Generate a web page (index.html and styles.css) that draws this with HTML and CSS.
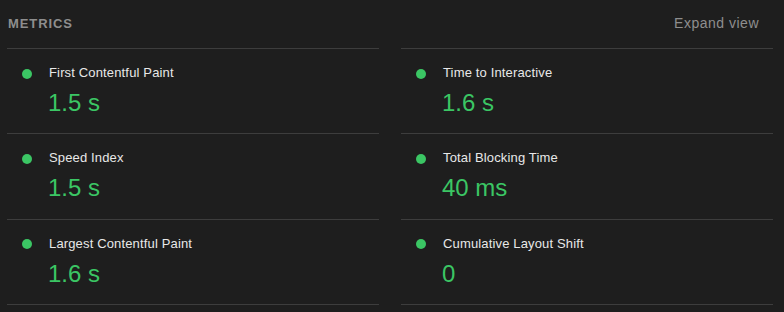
FILE: index.html
```html
<!DOCTYPE html>
<html>
  <head>
    <title>Metrics</title>
    <link rel="stylesheet" href="styles.css">
  </head>
  <body>
    <div class="metrics">
      <div class="metrics-header">
        <span class="metrics-title">Metrics</span>
        <span class="expand">Expand view</span>
      </div>

      <div class="metrics-grid">
        <div class="metric">
          <span class="dot"></span>
          <div class="metric-title">First Contentful Paint</div>
          <div class="metric-value">1.5&nbsp;s</div>
        </div>
        <div class="metric">
          <span class="dot"></span>
          <div class="metric-title">Time to Interactive</div>
          <div class="metric-value">1.6&nbsp;s</div>
        </div>
        <div class="metric">
          <span class="dot"></span>
          <div class="metric-title">Speed Index</div>
          <div class="metric-value">1.5&nbsp;s</div>
        </div>
        <div class="metric">
          <span class="dot"></span>
          <div class="metric-title">Total Blocking Time</div>
          <div class="metric-value">40&nbsp;ms</div>
        </div>
        <div class="metric">
          <span class="dot"></span>
          <div class="metric-title">Largest Contentful Paint</div>
          <div class="metric-value">1.6&nbsp;s</div>
        </div>
        <div class="metric">
          <span class="dot"></span>
          <div class="metric-title">Cumulative Layout Shift</div>
          <div class="metric-value">0</div>
        </div>
      </div>
    </div>
  </body>
</html>
```

FILE: styles.css
```css
body {
  margin: 0;
  background: #1e1e1e;
  font-family: "Liberation Sans", Arial, sans-serif;
}
.metrics { padding: 0 11px 0 7px; }
.metrics-header {
  display: flex;
  justify-content: space-between;
  align-items: center;
  height: 48px;
  padding-bottom: 2px;
  box-sizing: border-box;
}
.metrics-title {
  padding-left: 1px;
  color: #8e8e8e;
  font-size: 13px;
  font-weight: bold;
  letter-spacing: 0.9px;
  text-transform: uppercase;
}
.expand {
  padding-right: 14px;
  color: #8e8e8e;
  font-size: 14px;
  letter-spacing: 0.5px;
}
.metrics-grid {
  display: grid;
  grid-template-columns: 1fr 1fr;
  column-gap: 22px;
}
.metrics-grid .metric:nth-last-child(-n+2) { border-bottom: 1px solid #3d3d3d; }
.metric {
  display: grid;
  grid-template-columns: 26px 1fr;
  align-items: center;
  padding: 15px 0 14.33px 15px;
  border-top: 1px solid #3d3d3d;
}
.dot {
  width: 10px;
  height: 10px;
  margin-top: 1px;
  border-radius: 50%;
  background: #3bc664;
}
.metric-title {
  padding-left: 1px;
  color: #e8e8e8;
  font-size: 13px;
  line-height: 18px;
  letter-spacing: 0.15px;
}
.metric-value {
  grid-column: 2;
  margin-top: 5px;
  color: #3bc664;
  font-size: 24px;
  line-height: 32px;
}
```
